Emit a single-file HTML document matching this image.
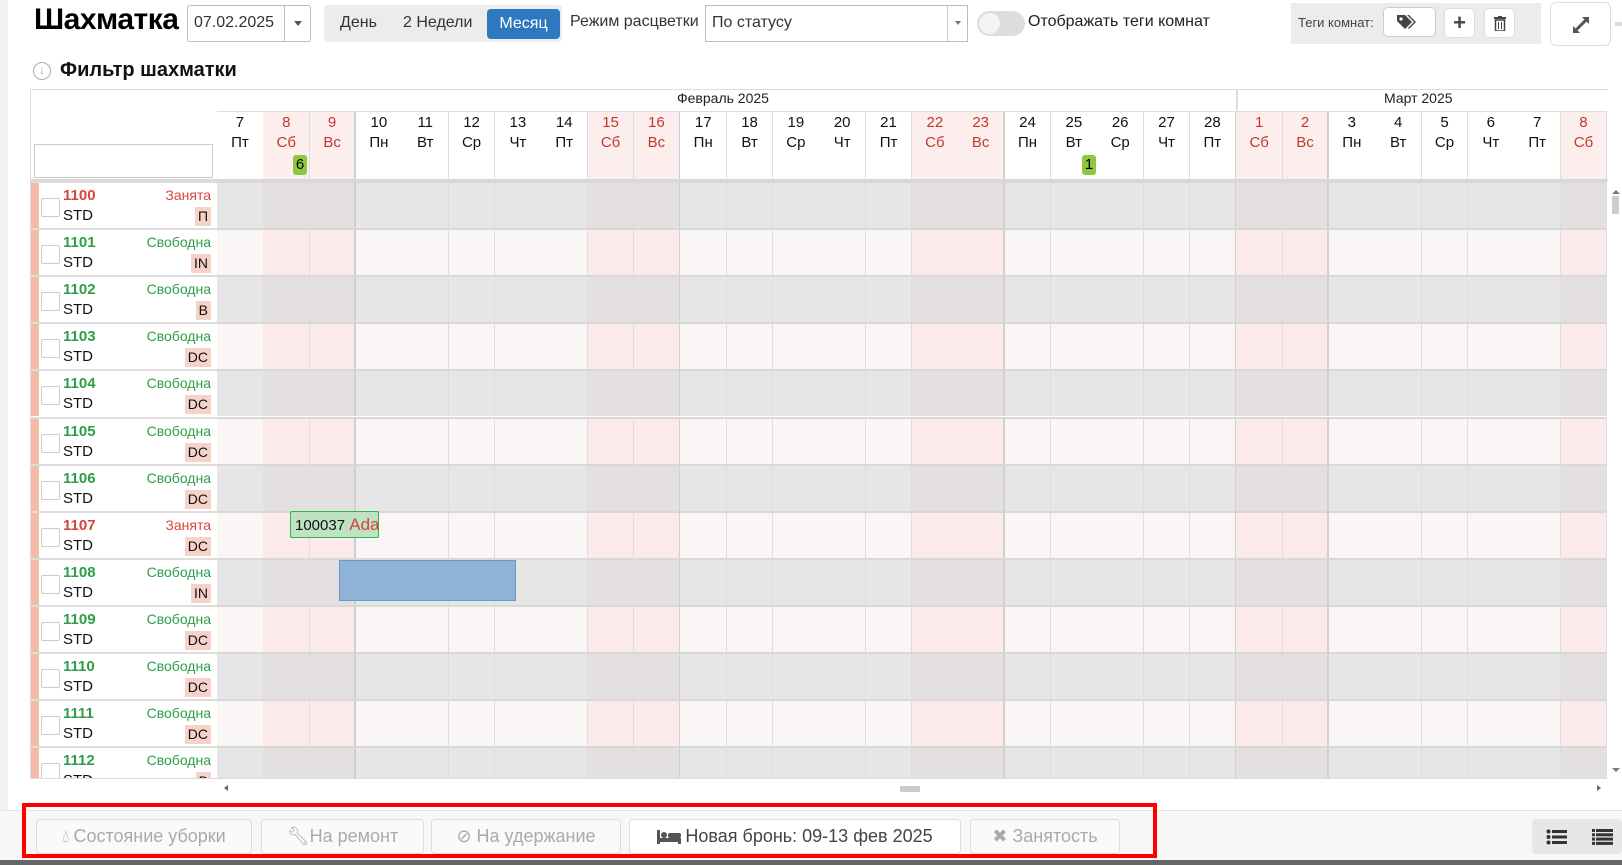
<!DOCTYPE html>
<html><head><meta charset="utf-8">
<style>
*{box-sizing:border-box;margin:0;padding:0}
body{width:1622px;height:865px;overflow:hidden;background:#fff;font-family:"Liberation Sans","DejaVu Sans",sans-serif;position:relative;color:#000}
.a{position:absolute}
.btn{position:absolute;border:1px solid #ddd;border-radius:4px;background:#fafafa;color:#aaa;font-size:18px;display:flex;align-items:center;justify-content:center;gap:4px}
</style></head><body>
<div class="a" style="left:0;top:0;width:8px;height:860px;background:#f1f1f1"></div>
<div class="a" style="left:34px;top:3px;font-size:30px;font-weight:bold;letter-spacing:-0.5px">Шахматка</div>
<div class="a" style="left:187px;top:5px;width:124px;height:37px;border:1px solid #bbb;border-radius:3px"><span class="a" style="left:6px;top:8px;font-size:16px;color:#333">07.02.2025</span><div class="a" style="left:96px;top:0;width:1px;height:35px;background:#bbb"></div><div class="a" style="left:106px;top:15px;border:4px solid transparent;border-top:5px solid #555"></div></div>
<div class="a" style="left:324px;top:5px;width:238px;height:37px;background:#ececec;border-radius:4px"></div>
<div class="a" style="left:340px;top:14px;font-size:16px;color:#333">День</div>
<div class="a" style="left:403px;top:14px;font-size:16px;color:#333">2 Недели</div>
<div class="a" style="left:487px;top:9px;width:73px;height:30px;background:#2f78bf;border-radius:4px;color:#fff;font-size:16px;text-align:center;line-height:30px">Месяц</div>
<div class="a" style="left:570px;top:13px;font-size:16px;color:#333">Режим расцветки</div>
<div class="a" style="left:705px;top:5px;width:263px;height:37px;border:1px solid #bbb"><span class="a" style="left:6px;top:8px;font-size:16px;color:#333">По статусу</span><div class="a" style="left:241px;top:0;width:1px;height:35px;background:#ccc"></div><div class="a" style="left:249px;top:15px;border:3px solid transparent;border-top:4px solid #777"></div></div>
<div class="a" style="left:977px;top:11px;width:48px;height:25px;border-radius:13px;background:#ddd"><div class="a" style="left:2px;top:2px;width:21px;height:21px;border-radius:50%;background:#f4f4f4"></div></div>
<div class="a" style="left:1028px;top:13px;font-size:16px;color:#222">Отображать теги комнат</div>
<div class="a" style="left:1291px;top:3px;width:250px;height:41px;background:#ececec"></div>
<div class="a" style="left:1298px;top:15px;font-size:13px;color:#444">Теги комнат:</div>
<div class="a" style="left:1383px;top:7px;width:53px;height:30px;border:1px solid #ccc;border-radius:5px;background:#fff"><svg class="a" style="left:12px;top:6px" width="22" height="16" viewBox="0 0 22 16"><path d="M1 1h8l7 7-7 7-8-8z" fill="#444"/><path d="M11 1h2l7 7-7 7-1-1 6-6z" fill="#444"/><circle cx="5" cy="5" r="1.6" fill="#fff"/></svg></div>
<div class="a" style="left:1444px;top:8px;width:31px;height:30px;border:1px solid #ddd;border-radius:5px;background:#fff;font-size:22px;font-weight:bold;text-align:center;line-height:28px;color:#444">+</div>
<div class="a" style="left:1484px;top:8px;width:31px;height:30px;border:1px solid #ddd;border-radius:5px;background:#fff"><svg class="a" style="left:9px;top:7px" width="12" height="15"><rect x="0" y="1" width="12" height="2" fill="#444"/><rect x="4" y="0" width="4" height="2" fill="#444"/><rect x="1.5" y="4" width="9" height="11" fill="none" stroke="#444" stroke-width="1.5"/><path d="M4.5 6v7M7.5 6v7" stroke="#444"/></svg></div>
<div class="a" style="left:1550px;top:2px;width:61px;height:44px;border:1px solid #ddd;border-radius:6px;background:#fff"><svg class="a" style="left:20px;top:12px" width="20" height="20"><path d="M3 17L17 3" stroke="#555" stroke-width="3"/><path d="M11 2h7v7zM2 11v7h7z" fill="#555"/></svg></div>
<div class="a" style="left:1615px;top:22px;width:7px;height:4px;background:#ddd"></div>
<div class="a" style="left:33px;top:62px;width:18px;height:18px;border:1.5px solid #aaa;border-radius:50%;color:#aaa;font-size:12px;text-align:center;line-height:15px">↓</div>
<div class="a" style="left:60px;top:59px;font-size:20px;font-weight:bold;color:#111">Фильтр шахматки</div>
<div id="grid" class="a" style="left:0;top:0;width:1622px;height:778px;overflow:hidden"></div>
<div class="a" style="left:30px;top:778px;width:1578px;height:1px;background:#ddd"></div>
<div class="a" style="left:221px;top:785px;border:3px solid transparent;border-right:4px solid #666"></div>
<div class="a" style="left:900px;top:786px;width:20px;height:6px;background:#ccc"></div>
<div class="a" style="left:1597px;top:785px;border:3px solid transparent;border-left:4px solid #666"></div>
<div class="a" style="left:1612px;top:186px;border:4px solid transparent;border-bottom:4px solid #777"></div>
<div class="a" style="left:1612px;top:196px;width:7px;height:18px;background:#ccc"></div>
<div class="a" style="left:1612px;top:768px;border:4px solid transparent;border-top:4px solid #777"></div>
<div class="a" style="left:0;top:810px;width:1622px;height:50px;background:#f7f7f7;border-top:1px solid #e4e4e4"></div>
<div class="a" style="left:22px;top:803px;width:1135px;height:55px;border:4px solid #f00"></div>
<div class="btn" style="left:36px;top:819px;width:216px;height:35px">💧&#xFE0E;<span style="font-size:18px">Состояние уборки</span></div>
<div class="btn" style="left:261px;top:819px;width:163px;height:35px">🔧&#xFE0E;На ремонт</div>
<div class="btn" style="left:431px;top:819px;width:190px;height:35px">⊘ На удержание</div>
<div class="btn" style="left:629px;top:819px;width:332px;height:35px;background:#fff;color:#444"><svg width="24" height="16"><rect x="0" y="1" width="3" height="14" fill="#555"/><rect x="3" y="9" width="21" height="4" fill="#555"/><rect x="21" y="9" width="3" height="6" fill="#555"/><circle cx="7" cy="6" r="3" fill="#555"/><rect x="11" y="4" width="13" height="5" rx="2" fill="#555"/></svg>Новая бронь: 09-13 фев 2025</div>
<div class="btn" style="left:970px;top:819px;width:150px;height:35px">✖ Занятость</div>
<div class="a" style="left:1532px;top:819px;width:90px;height:35px;background:#e7e7e7;border-radius:4px"></div>
<svg class="a" style="left:1546px;top:829px" width="22" height="16"><circle cx="2.5" cy="2.5" r="2" fill="#333"/><circle cx="2.5" cy="8" r="2" fill="#333"/><circle cx="2.5" cy="13.5" r="2" fill="#333"/><rect x="6" y="1" width="15" height="3" fill="#333"/><rect x="6" y="6.5" width="15" height="3" fill="#333"/><rect x="6" y="12" width="15" height="3" fill="#333"/></svg>
<svg class="a" style="left:1592px;top:829px" width="22" height="16"><rect x="0" y="0" width="3" height="3" fill="#333"/><rect x="0" y="4.3" width="3" height="3" fill="#333"/><rect x="0" y="8.6" width="3" height="3" fill="#333"/><rect x="0" y="12.9" width="3" height="3" fill="#333"/><rect x="4" y="0" width="17" height="3" fill="#333"/><rect x="4" y="4.3" width="17" height="3" fill="#333"/><rect x="4" y="8.6" width="17" height="3" fill="#333"/><rect x="4" y="12.9" width="17" height="3" fill="#333"/></svg>
<div class="a" style="left:0;top:860px;width:1622px;height:5px;background:#666"></div>
<script>
var g=document.getElementById('grid'),h='';
var L=30,C0=217,W=46.33,T=181,RH=47.1;
function d(s){h+=s}
d('<div class="a" style="left:'+L+'px;top:89px;width:1578px;height:1px;background:#ddd"></div>');
d('<div class="a" style="left:'+L+'px;top:89px;width:1px;height:690px;background:#ddd"></div>');
d('<div class="a" style="left:34px;top:144px;width:179px;height:34px;border:1px solid #ccc"></div>');
d('<div class="a" style="left:677px;top:90px;font-size:14px;color:#222">Февраль 2025</div>');
d('<div class="a" style="left:1384px;top:90px;font-size:14px;color:#222">Март 2025</div>');
var days=[],dn=['Пт','Сб','Вс','Пн','Вт','Ср','Чт'];
for(var i=7;i<=28;i++)days.push(i);for(var i=1;i<=8;i++)days.push(i);
for(var k=0;k<30;k++){var x=C0+k*W,dw=dn[k%7],we=(dw=='Сб'||dw=='Вс');
 var br=(dw=='Вс'||k==21)?'2px solid #d0d0d0':'1px solid #ddd';
 d('<div class="a" style="left:'+x+'px;top:111px;width:'+(W+0.5)+'px;height:70px;background:'+(we?'#fdeeee':'#fff')+';border-right:'+br+';border-top:1px solid #ddd;text-align:center;font-size:15px;line-height:20px;padding-top:1px;color:'+(we?'#c0392b':'#111')+'">'+days[k]+'<br>'+dw+'</div>');
 for(var r=0;r<13;r++){var y=T+r*RH,ev=r%2==0,bg=ev?(we?'#e5e0e0':'#e6e6e6'):(we?'#fce9e9':'#faf6f5');
  d('<div class="a" style="left:'+x+'px;top:'+y+'px;width:'+(W+0.5)+'px;height:'+RH+'px;background:'+bg+';border-right:'+br+';border-top:2px solid #d8d8d8"></div>');}
}
d('<div class="a" style="left:1236px;top:90px;width:2px;height:21px;background:#ddd"></div>');
d('<div class="a" style="left:293px;top:155px;width:14px;height:20px;background:#8dc63f;border-radius:3px;text-align:center;font-size:15px;line-height:20px">6</div>');
d('<div class="a" style="left:1082px;top:155px;width:14px;height:20px;background:#8dc63f;border-radius:3px;text-align:center;font-size:15px;line-height:20px">1</div>');
d('<div class="a" style="left:'+L+'px;top:179px;width:1578px;height:2px;background:#d8d8d8"></div>');
var rooms=[['1100',1,'П'],['1101',0,'IN'],['1102',0,'B'],['1103',0,'DC'],['1104',0,'DC'],['1105',0,'DC'],['1106',0,'DC'],['1107',1,'DC'],['1108',0,'IN'],['1109',0,'DC'],['1110',0,'DC'],['1111',0,'DC'],['1112',0,'B']];
for(var r=0;r<13;r++){var y=T+r*RH,o=rooms[r],c=o[1]?'#d9443a':'#2e9e48';
 d('<div class="a" style="left:31px;top:'+y+'px;width:186px;height:'+RH+'px;background:#fff;border-top:2px solid #ddd;overflow:hidden">'+
 '<div class="a" style="left:0;top:0;width:8px;height:47px;background:#f4bca6"></div>'+
 '<div class="a" style="left:10px;top:15px;width:19px;height:19px;border:1px solid #ccc;border-radius:2px;background:#fff"></div>'+
 '<div class="a" style="left:32px;top:4px;font-size:15px;font-weight:bold;color:'+c+'">'+o[0]+'</div>'+
 '<div class="a" style="left:32px;top:24px;font-size:15px;color:#111">STD</div>'+
 '<div class="a" style="right:6px;top:4px;font-size:14px;color:'+c+'">'+(o[1]?'Занята':'Свободна')+'</div>'+
 '<div class="a" style="right:6px;top:24px;height:19px;padding:0 3px;background:#f6d2c8;font-size:14px;line-height:19px;color:#111">'+o[2]+'</div></div>');}
d('<div class="a" style="left:290px;top:511px;width:89px;height:27px;background:#bfe3c2;border:1px solid #2bb84a;border-radius:2px;font-size:15px;line-height:25px;padding-left:4px;overflow:hidden;white-space:nowrap;color:#111">100037 <span style="color:#d9443a;font-size:17px">Adam</span></div>');
d('<div class="a" style="left:339px;top:560px;width:177px;height:41px;background:#8fb3d7;border:1px solid #6d97c4"></div>');
g.innerHTML=h;
</script>
</body></html>
